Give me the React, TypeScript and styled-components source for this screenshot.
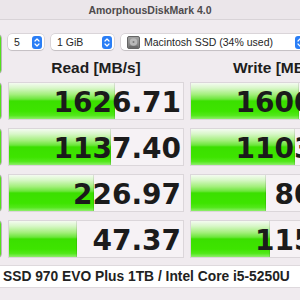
import React from 'react';
import styled, { createGlobalStyle } from 'styled-components';

const GlobalStyle = createGlobalStyle`
	html, body {
		margin: 0;
		padding: 0;
		background: #f0ebef;
	}
	body {
		font-family: 'Liberation Sans', Arial, sans-serif;
	}
`;

const Window = styled.div`
	width: 300px;
	height: 300px;
	overflow: hidden;
	background: #f0ebef;
	display: flex;
	flex-direction: column;
`;

const TitleBar = styled.div`
	flex: none;
	height: 19px;
	border-bottom: 1px solid #d8d3d7;
	background: #ebe6ea;
	display: flex;
	align-items: center;
	justify-content: center;
	font-size: 10.5px;
	font-weight: bold;
	color: #4d4a4c;
`;

const Body = styled.div`
	display: grid;
	grid-template-columns: 2px 176px 176px;
	grid-template-rows: 16px 16px repeat(4, 38px) 21px;
	column-gap: 6px;
	row-gap: 8px;
	padding-top: 14px;
`;

const SideButton = styled.div<{ $row: string }>`
	grid-column: 1;
	grid-row: ${(p) => p.$row};
	margin-left: -58px;
	width: 60px;
	border-radius: 4px;
	border: 1px solid #b9b4b8;
	box-sizing: border-box;
	background: linear-gradient(to right, #c9ecb8, #52e01a);
`;

const Controls = styled.div`
	grid-column: 2 / 4;
	display: flex;
	align-items: center;
	gap: 6px;
`;

const Select = styled.div<{ $width: number }>`
	flex: none;
	width: ${(p) => p.$width}px;
	height: 16px;
	box-sizing: border-box;
	background: #ffffff;
	border-radius: 4px;
	box-shadow: 0 0 0 0.5px rgba(0, 0, 0, 0.18), 0 1px 1px rgba(0, 0, 0, 0.1);
	display: flex;
	align-items: center;
	gap: 4px;
	padding: 0 2px 0 6px;
	font-size: 10.5px;
	color: #262626;
	& + & {
		margin-left: 1px;
	}
`;

const SelectText = styled.span`
	flex: 1;
	white-space: nowrap;
`;

const Header = styled.div`
	text-align: center;
	font-size: 15.5px;
	font-weight: bold;
	color: #1d1d1d;
	line-height: 16px;
	padding-top: 2px;
`;

const ResultCell = styled.div`
	height: 38px;
	box-sizing: border-box;
	border: 1px solid #dbd6da;
	background: #f6f2f5;
	display: grid;
	overflow: hidden;
`;

const Bar = styled.div`
	grid-area: 1 / 1;
	height: 100%;
	box-sizing: border-box;
	border-right: 1px solid rgba(0, 0, 0, 0.1);
	background: linear-gradient(
		to bottom,
		#f4fbf1 0%,
		#d8f7c8 14%,
		#a3ef7c 32%,
		#6be63a 45%,
		#3bdf00 50%,
		#3ee400 78%,
		#52e81a 90%,
		#8fee6c 100%
	);
`;

const Value = styled.span`
	grid-area: 1 / 1;
	justify-self: end;
	align-self: center;
	padding: 3px 2px 0 0;
	font-family: 'DejaVu Sans', sans-serif;
	font-weight: bold;
	font-size: 28px;
	line-height: 1;
	color: #1b1b1b;
	white-space: nowrap;
`;

const Comment = styled.div`
	grid-column: 1 / -1;
	height: 21px;
	background: #ffffff;
	box-shadow: 0 0 0 0.5px rgba(0, 0, 0, 0.15);
	display: flex;
	align-items: center;
	padding-left: 3px;
	font-size: 13.8px;
	font-weight: bold;
	color: #222222;
	white-space: nowrap;
`;

const Stepper = () => (
	<svg width="10" height="13" viewBox="0 0 10 13">
		<rect x="0" y="0" width="10" height="13" rx="3" fill="#2a7ef6" />
		<path d="M3 5 L5 3 L7 5" stroke="#fff" strokeWidth="1.2" fill="none" strokeLinecap="round" strokeLinejoin="round" />
		<path d="M3 8 L5 10 L7 8" stroke="#fff" strokeWidth="1.2" fill="none" strokeLinecap="round" strokeLinejoin="round" />
	</svg>
);

const DiskIcon = () => (
	<svg width="13" height="13" viewBox="0 0 13 13">
		<defs>
			<linearGradient id="disk" x1="0" y1="0" x2="0" y2="1">
				<stop offset="0" stopColor="#a3a3a3" />
				<stop offset="1" stopColor="#767676" />
			</linearGradient>
		</defs>
		<rect x="0.5" y="0.5" width="12" height="12" rx="1.5" fill="url(#disk)" stroke="#656565" />
		<circle cx="6.5" cy="6" r="3.8" fill="#b9b9b9" />
		<circle cx="6.5" cy="6" r="1" fill="#7a7a7a" />
		<rect x="2" y="10.5" width="9" height="1" fill="#5e5e5e" />
	</svg>
);

type Result = {
	read: string;
	readWidth: number;
	write: string;
	writeWidth: number;
};

const results: Result[] = [
	{ read: '1626.71', readWidth: 106, write: '1600.54', writeWidth: 108 },
	{ read: '1137.40', readWidth: 102, write: '1103.16', writeWidth: 104 },
	{ read: '226.97', readWidth: 85, write: '80.29', writeWidth: 75 },
	{ read: '47.37', readWidth: 68, write: '115.82', writeWidth: 79 },
];

const App = () => {
	return (
		<Window>
			<GlobalStyle />
			<TitleBar>AmorphousDiskMark 4.0</TitleBar>
			<Body>
				<SideButton $row="1 / 3" />
				<Controls>
					<Select $width={36}>
						<SelectText>5</SelectText>
						<Stepper />
					</Select>
					<Select $width={63}>
						<SelectText>1 GiB</SelectText>
						<Stepper />
					</Select>
					<Select $width={186}>
						<DiskIcon />
						<SelectText>Macintosh SSD (34% used)</SelectText>
						<Stepper />
					</Select>
				</Controls>
				<Header>Read [MB/s]</Header>
				<Header>Write [MB/s]</Header>
				{results.map((r, i) => (
					<React.Fragment key={i}>
						<SideButton $row={`${i + 3}`} />
						<ResultCell>
							<Bar style={{ width: r.readWidth }} />
							<Value>{r.read}</Value>
						</ResultCell>
						<ResultCell>
							<Bar style={{ width: r.writeWidth }} />
							<Value>{r.write}</Value>
						</ResultCell>
					</React.Fragment>
				))}
				<Comment>SSD 970 EVO Plus 1TB / Intel Core i5-5250U</Comment>
			</Body>
		</Window>
	);
};

export default App;
